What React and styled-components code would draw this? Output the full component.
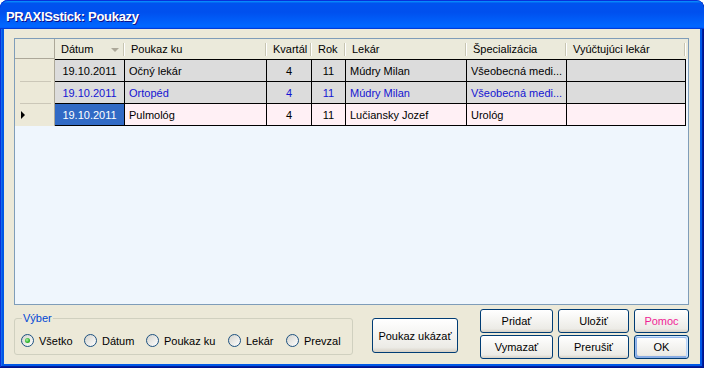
import React from 'react';
import styled, { createGlobalStyle } from 'styled-components';

const GlobalStyle = createGlobalStyle`
  html, body {
    margin: 0;
    padding: 0;
    background: #fff;
  }
  body {
    font-family: "Liberation Sans", Arial, sans-serif;
    font-size: 11px;
    color: #000;
  }
`;

// column widths of the grid (row header first)
const COLS = '40px 70px 142px 45px 34px 121px 100px 119px 1fr';

const Window = styled.div`
  width: 704px;
  height: 368px;
  box-sizing: border-box;
  display: flex;
  flex-direction: column;
  background: #0058e6;
  border-radius: 8px 8px 0 0;
  overflow: hidden;
  box-shadow: inset -1px -1px #00138c, inset 1px 0 #0831d9, inset -2px -2px #001ea0, inset 2px 0 #166aee;
`;

const TitleBar = styled.div`
  height: 29px;
  flex: none;
  box-sizing: border-box;
  display: flex;
  align-items: center;
  padding: 3px 0 0 6px;
  background: linear-gradient(180deg, #0997ff, #0053ee 8%, #0050ee 40%, #0066ff 88%, #0066ff 93%, #005bff 95%, #003dd7 96%, #003dd7);
  border-top: 1px solid #0831d9;
  border-radius: 8px 7px 0 0;
  color: #fff;
  font-weight: bold;
  font-size: 13px;
  letter-spacing: -0.3px;
  text-shadow: 1px 1px #0f1089;
`;

const Client = styled.div`
  flex: 1;
  margin: 0 4px 4px;
  background: #ece9d8;
  display: flex;
  flex-direction: column;
  padding: 9px 11px 0 10px;
`;

const GridBox = styled.div`
  height: 267px;
  flex: none;
  box-sizing: border-box;
  border: 1px solid #7f9db9;
  background: #eff6fd;
  display: flex;
  flex-direction: column;
`;

const HeaderRow = styled.div`
  display: grid;
  grid-template-columns: ${COLS};
  height: 20px;
  background: #ebeadb;
`;

const Corner = styled.div`
  box-shadow: inset -1px -1px #aca899;
`;

const HeadCell = styled.div`
  position: relative;
  display: flex;
  align-items: center;
  padding-left: 6px;
  white-space: nowrap;
  overflow: hidden;

  &::after {
    content: '';
    position: absolute;
    right: 1px;
    top: 4px;
    bottom: 3px;
    width: 1px;
    background: #c7c5b2;
    box-shadow: 1px 0 #fff;
  }
`;

const SortArrow = styled.span`
  position: absolute;
  right: 6px;
  top: 9px;
  width: 0;
  height: 0;
  border-left: 4px solid transparent;
  border-right: 4px solid transparent;
  border-top: 4px solid #aca899;
`;

const DataRow = styled.div`
  display: grid;
  grid-template-columns: ${COLS};
  height: ${p => (p.$first ? 23 : 22)}px;
`;

const RowHead = styled.div`
  position: relative;
  background: #ece9d8;
  box-shadow: inset -1px 0 #aca899;
  display: flex;
  align-items: center;
  padding-left: 6px;

  &::after {
    content: '';
    display: ${p => (p.$last ? 'none' : 'block')};
    position: absolute;
    left: 5px;
    right: 4px;
    bottom: 0;
    height: 1px;
    background: #cbc7b8;
  }
`;

const Pointer = styled.span`
  width: 0;
  height: 0;
  border-top: 4px solid transparent;
  border-bottom: 4px solid transparent;
  border-left: 4px solid #000;
`;

const Cell = styled.div`
  box-sizing: border-box;
  border-right: 1px solid #000;
  border-bottom: 1px solid #000;
  border-top: ${p => (p.$first ? '1px solid #000' : 'none')};
  background: ${p => (p.$sel ? '#316ac5' : p.$bg)};
  color: ${p => (p.$sel ? '#fff' : p.$fg)};
  display: flex;
  align-items: center;
  justify-content: ${p => (p.$center ? 'center' : 'flex-start')};
  padding: 0 4px;
  white-space: nowrap;
  overflow: hidden;
`;

const Footer = styled.div`
  display: flex;
  align-items: flex-start;
  padding-top: 4px;
`;

const GroupBox = styled.fieldset`
  width: 338px;
  box-sizing: border-box;
  margin: 3px 0 0;
  padding: 0 6px 7px;
  border: 1px solid #d0d0bf;
  border-radius: 3px;
`;

const Legend = styled.legend`
  padding: 0 1px;
  margin-left: 1px;
  line-height: 13px;
  color: #0046d5;
`;

const RadioRow = styled.div`
  display: flex;
  align-items: center;
  margin-top: 9px;
  height: 13px;
`;

const RadioItem = styled.label`
  display: flex;
  align-items: center;
  gap: 5px;
  width: ${p => p.$w}px;
  flex: none;
  white-space: nowrap;
`;

const RadioCircle = styled.span`
  width: 13px;
  height: 13px;
  box-sizing: border-box;
  border-radius: 50%;
  border: 1px solid #1c5180;
  background: linear-gradient(135deg, #d4d3cc, #ffffff);
  display: flex;
  align-items: center;
  justify-content: center;
  flex: none;

  &::after {
    content: '';
    display: ${p => (p.$checked ? 'block' : 'none')};
    width: 5px;
    height: 5px;
    border-radius: 50%;
    background: radial-gradient(circle at 40% 40%, #b4f5b0, #2fb52b 55%, #1d911b);
  }
`;

const Button = styled.button`
  box-sizing: border-box;
  width: ${p => p.$w}px;
  height: ${p => p.$h || 24}px;
  margin: 0;
  padding: 0;
  font-family: "Liberation Sans", Arial, sans-serif;
  font-size: 11px;
  color: ${p => p.$color || '#000'};
  background: linear-gradient(180deg, #fff, #ecebe6 86%, #d6d0c5);
  border: 1px solid #003c74;
  border-radius: 3px;
  box-shadow: ${p =>
    p.$default
      ? 'inset -1px 1px #cee7ff, inset 1px 2px #98b8ea, inset -2px 2px #bcd4f6, inset 1px -1px #89ade4, inset 2px -2px #89ade4'
      : 'none'};
`;

const BigButton = styled(Button)`
  margin: 9px 0 0 19px;
`;

const ButtonGrid = styled.div`
  display: grid;
  grid-template-columns: 73px 71px 55px;
  grid-auto-rows: 24px;
  column-gap: 5px;
  row-gap: 2px;
  margin-left: 22px;
`;

const rows = [
  { date: '19.10.2011', ref: 'Očný lekár', q: 4, y: 11, doc: 'Múdry Milan', spec: 'Všeobecná medi...', bg: '#dcdcdc', fg: '#000' },
  { date: '19.10.2011', ref: 'Ortopéd', q: 4, y: 11, doc: 'Múdry Milan', spec: 'Všeobecná medi...', bg: '#dcdcdc', fg: '#1414d2' },
  { date: '19.10.2011', ref: 'Pulmológ', q: 4, y: 11, doc: 'Lučiansky Jozef', spec: 'Urológ', bg: '#fff0f5', fg: '#000', current: true },
];

const radios = [
  { label: 'Všetko', w: 63, checked: true },
  { label: 'Dátum', w: 62 },
  { label: 'Poukaz ku', w: 82 },
  { label: 'Lekár', w: 58 },
  { label: 'Prevzal', w: 60 },
];

const App = () => {
  return (
    <>
      <GlobalStyle />
      <Window>
        <TitleBar>PRAXISstick: Poukazy</TitleBar>
        <Client>
          <GridBox>
            <HeaderRow>
              <Corner />
              <HeadCell>
                Dátum
                <SortArrow />
              </HeadCell>
              <HeadCell>Poukaz ku</HeadCell>
              <HeadCell>Kvartál</HeadCell>
              <HeadCell>Rok</HeadCell>
              <HeadCell>Lekár</HeadCell>
              <HeadCell>Špecializácia</HeadCell>
              <HeadCell>Vyúčtujúci lekár</HeadCell>
            </HeaderRow>
            {rows.map((r, i) => {
              const first = i === 0;
              return (
                <DataRow key={i} $first={first}>
                  <RowHead $last={i === rows.length - 1}>{r.current && <Pointer />}</RowHead>
                  <Cell $first={first} $bg={r.bg} $fg={r.fg} $center $sel={r.current}>{r.date}</Cell>
                  <Cell $first={first} $bg={r.bg} $fg={r.fg}>{r.ref}</Cell>
                  <Cell $first={first} $bg={r.bg} $fg={r.fg} $center>{r.q}</Cell>
                  <Cell $first={first} $bg={r.bg} $fg={r.fg} $center>{r.y}</Cell>
                  <Cell $first={first} $bg={r.bg} $fg={r.fg}>{r.doc}</Cell>
                  <Cell $first={first} $bg={r.bg} $fg={r.fg}>{r.spec}</Cell>
                  <Cell $first={first} $bg={r.bg} $fg={r.fg} />
                </DataRow>
              );
            })}
          </GridBox>
          <Footer>
            <GroupBox>
              <Legend>Výber</Legend>
              <RadioRow>
                {radios.map(r => (
                  <RadioItem key={r.label} $w={r.w}>
                    <RadioCircle $checked={r.checked} />
                    {r.label}
                  </RadioItem>
                ))}
              </RadioRow>
            </GroupBox>
            <BigButton $w={86} $h={35}>Poukaz ukázať</BigButton>
            <ButtonGrid>
              <Button $w={73}>Pridať</Button>
              <Button $w={71}>Uložiť</Button>
              <Button $w={55} $color="#f01e96">Pomoc</Button>
              <Button $w={73}>Vymazať</Button>
              <Button $w={71}>Prerušiť</Button>
              <Button $w={55} $default>OK</Button>
            </ButtonGrid>
          </Footer>
        </Client>
      </Window>
    </>
  );
};

export default App;
